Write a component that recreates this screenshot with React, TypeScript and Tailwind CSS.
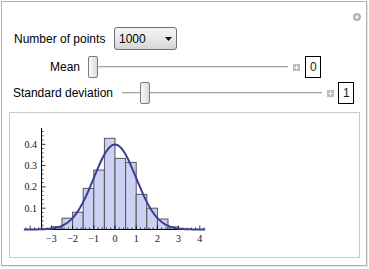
import React from "react";

// histogram of 1000 draws, bin width 0.5 starting at -3
const BINS = [0.013, 0.053, 0.081, 0.193, 0.279, 0.428, 0.334, 0.315, 0.165, 0.1, 0.049, 0.012];

const X = (u: number) => 115 + 21.2 * u;
const Y = (v: number) => 229.5 - 213 * v;

function pdf(u: number) {
  return Math.exp(-(u * u) / 2) / Math.sqrt(2 * Math.PI);
}

function SmallPlus() {
  return (
    <svg width="7" height="7" viewBox="0 0 7 7" className="shrink-0">
      <rect width="7" height="7" fill="#bcbcbc" />
      <path d="M3.5 1.5v4M1.5 3.5h4" stroke="#fff" strokeWidth="1" />
    </svg>
  );
}

function Slider({ offset }: { offset: number }) {
  return (
    <div className="relative h-[22px] w-[200px] shrink-0">
      <div className="absolute left-0 right-0 top-[10px]">
        <div className="h-[1px] bg-[#a5a5a5]" />
        <div className="h-[1px] bg-[#e4e4e4]" />
      </div>
      <div
        className="absolute top-0 h-[22px] w-[10px] rounded-[2px] border border-[#7a7a7a] bg-linear-to-r from-[#fafafa] to-[#dadada]"
        style={{ left: offset }}
      />
    </div>
  );
}

function ValueBox({ value }: { value: string }) {
  return (
    <div className="flex h-[22px] w-[16px] shrink-0 items-center border border-black pl-[4px] text-[12px] text-[#1a1a1a]">
      {value}
    </div>
  );
}

function Chart() {
  const curve: string[] = [];
  for (let u = -4.3; u <= 4.26; u += 0.05) {
    curve.push(`${X(u).toFixed(2)},${Y(pdf(u)).toFixed(2)}`);
  }

  const yMinor: number[] = [];
  for (let i = 1; i <= 23; i++) yMinor.push(i * 0.02);
  const xMinor: number[] = [];
  for (let i = -21; i <= 21; i++) xMinor.push(i * 0.2);

  return (
    <svg width="349" height="144" viewBox="10 113 349 144">
      {BINS.map((h, i) => {
        const u0 = -3 + i * 0.5;
        return (
          <rect
            key={i}
            x={X(u0)}
            y={Y(h)}
            width={X(u0 + 0.5) - X(u0)}
            height={Y(0) - Y(h)}
            fill="#ccd1f3"
            stroke="#555"
            strokeWidth="1"
          />
        );
      })}

      {/* axes */}
      <line x1="24" y1="229.5" x2="205" y2="229.5" stroke="#000" strokeWidth="1" />
      <line x1="41.5" y1="128" x2="41.5" y2="229.5" stroke="#000" strokeWidth="1" />

      {yMinor.map((v) => {
        const major = Math.abs(v * 10 - Math.round(v * 10)) < 0.01;
        return (
          <line
            key={v}
            x1="41.5"
            x2={major ? 45.5 : 43.5}
            y1={Y(v)}
            y2={Y(v)}
            stroke="#000"
            strokeWidth="0.8"
          />
        );
      })}
      {xMinor.map((u) => {
        if (X(u) < 24 || X(u) > 205) return null;
        const major = Math.abs(u - Math.round(u)) < 0.01;
        return (
          <line
            key={u}
            x1={X(u)}
            x2={X(u)}
            y1="229.5"
            y2={major ? 225.5 : 227.5}
            stroke="#000"
            strokeWidth="0.8"
          />
        );
      })}

      <polyline points={curve.join(" ")} fill="none" stroke="#3d3d99" strokeWidth="2" />

      <g fontFamily="'Liberation Serif', serif" fontSize="10" fill="#111">
        {[0.1, 0.2, 0.3, 0.4].map((v) => (
          <text key={v} x="37" y={Y(v) + 3.5} textAnchor="end">
            {v.toFixed(1)}
          </text>
        ))}
        {[-3, -2, -1, 0, 1, 2, 3, 4].map((u) => (
          <text key={u} x={X(u)} y="241.5" textAnchor="middle">
            {u < 0 ? `\u2212${-u}` : u}
          </text>
        ))}
      </g>
    </svg>
  );
}

export default function App() {
  return (
    <div className="h-[269px] w-[369px] bg-white pl-[1px] pt-[1px] font-['Liberation_Sans',Arial,sans-serif] text-black">
      <div className="flex h-[265px] w-[366px] flex-col border border-[#b2b2b2] shadow-[1px_1px_0_#e6e6e6]">
        <div className="flex h-[25px] justify-end pr-[5px] pt-[11px]">
          <svg width="8" height="8" viewBox="0 0 8 8">
            <circle cx="4" cy="4" r="4" fill="#b3b3b3" />
            <path d="M4 2v4M2 4h4" stroke="#fff" strokeWidth="1.2" />
          </svg>
        </div>

        <div className="flex h-[23px] items-center">
          <div className="w-[112px] pl-[12px] text-[12px] whitespace-nowrap">Number of points</div>
          <div className="flex h-[23px] w-[63px] items-center justify-between rounded-[3px] border border-[#707070] bg-linear-to-b from-[#f4f4f4] via-[#e9e9e9] to-[#d4d4d4] pl-[4px] pr-[4px] text-[12px]">
            <span>1000</span>
            <svg width="7" height="4" viewBox="0 0 7 4">
              <path d="M0 0h7L3.5 4z" fill="#111" />
            </svg>
          </div>
        </div>

        <div className="mt-[6px] flex h-[22px] items-center">
          <div className="flex w-[78px] justify-end text-[12px] whitespace-nowrap">Mean</div>
          <div className="ml-[8px]">
            <Slider offset={0} />
          </div>
          <div className="ml-[5px]">
            <SmallPlus />
          </div>
          <div className="ml-[5px]">
            <ValueBox value="0" />
          </div>
        </div>

        <div className="mt-[4px] flex h-[22px] items-center">
          <div className="flex w-[111px] justify-end text-[12px] whitespace-nowrap">Standard deviation</div>
          <div className="ml-[9px]">
            <Slider offset={18} />
          </div>
          <div className="ml-[5px]">
            <SmallPlus />
          </div>
          <div className="ml-[4px]">
            <ValueBox value="1" />
          </div>
        </div>

        <div className="ml-[7px] mt-[8px] h-[146px] w-[351px] border border-[#c9c9c9] bg-white">
          <Chart />
        </div>
      </div>
    </div>
  );
}
